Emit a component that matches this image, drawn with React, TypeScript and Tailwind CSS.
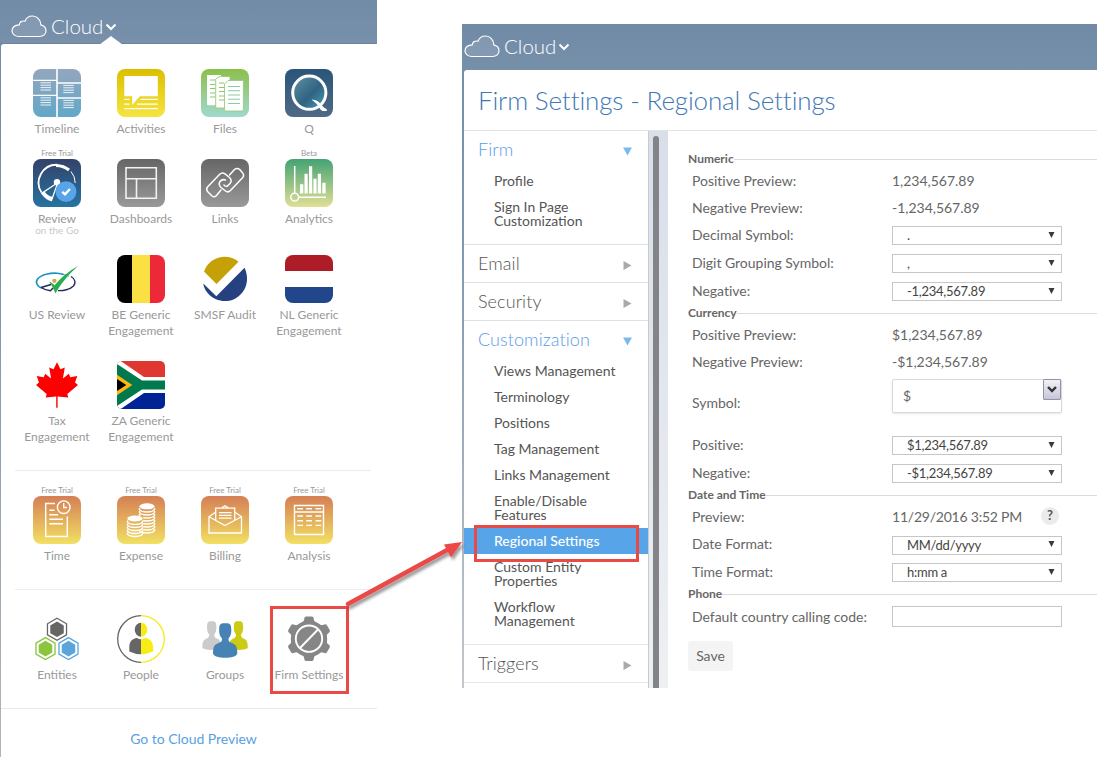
import React from "react";

type Stops = [string, string];

function Tile({ id, stops, children }: { id: string; stops: Stops; children: React.ReactNode }) {
  return (
    <svg viewBox="0 0 48 48" className="h-12 w-12 shrink-0">
      <defs>
        <linearGradient id={id} x1="0" y1="0" x2="0" y2="1">
          <stop offset="0" stopColor={stops[0]} />
          <stop offset="1" stopColor={stops[1]} />
        </linearGradient>
      </defs>
      <rect width="48" height="48" rx="8" fill={`url(#${id})`} />
      {children}
    </svg>
  );
}

function Plain({ children }: { children: React.ReactNode }) {
  return (
    <svg viewBox="0 0 48 48" className="h-12 w-12 shrink-0">
      {children}
    </svg>
  );
}

const ORANGE: Stops = ["#d57f55", "#f2e063"];
const GRAY: Stops = ["#666666", "#999999"];

function Timeline() {
  return (
    <Tile id="g-timeline" stops={["#94a6bd", "#62a8c8"]}>
      <g stroke="#fff" fill="none">
        <path strokeWidth="1.6" d="M24 0V48" />
        <path strokeWidth="1.3" d="M0 11.3H24M0 26.4H24M24 14H48M24 29H48" />
        <path
          strokeWidth="1"
          opacity=".85"
          d="M7.5 13.8H18M7.5 16.2H18M7.5 18.6H18M7.5 21H18M7.5 28.8H18M7.5 31.2H18M7.5 33.6H18M7.5 36H18M30.3 16.4H40.8M30.3 18.8H40.8M30.3 21.2H40.8M30.3 23.6H40.8M30.3 31.4H40.8M30.3 33.8H40.8M30.3 36.2H40.8M30.3 38.6H40.8"
        />
      </g>
    </Tile>
  );
}

function Activities() {
  return (
    <Tile id="g-act" stops={["#dbbf00", "#f6e43f"]}>
      <path fill="#fff" d="M7.3 7H40.8V27.2H23L15.2 36V27.2H7.3Z" />
      <path
        stroke="#fff"
        strokeWidth="1.3"
        d="M7.3 30.4H12.5M7.3 35.2H12.5M23.5 30.4H40.8M20 35.2H40.8M7.3 39.6H40.8"
      />
    </Tile>
  );
}

function Files() {
  return (
    <Tile id="g-files" stops={["#8bc04a", "#9fd9cd"]}>
      <path fill="#fff" d="M6 6H20V36.3H7.5A1.5 1.5 0 0 1 6 34.8Z" />
      <path stroke="#8fc66c" strokeWidth="1" d="M9 11H14M9 15.5H14M9 19.5H14M9 24H14M9 28H14" />
      <path fill="#fff" stroke="#98cc72" strokeWidth=".9" d="M17 8.3L19.5 7.5H29V39H16.5A1.5 1.5 0 0 1 14.7 37.5V10Z" />
      <path stroke="#8fc66c" strokeWidth="1" d="M18 14H23M18 18.5H23M18 22.5H23M18 27H23M18 31H23" />
      <path fill="#fff" stroke="#98cc82" strokeWidth=".9" d="M27 11.5H42.4V40.7A1.3 1.3 0 0 1 41 42H24.8A1.3 1.3 0 0 1 23.5 40.7V15Z" />
      <path stroke="#8fcaa0" strokeWidth="1.1" d="M27 17.5H39M27 21.8H39M27 26H39M27 30.3H39M27 34.5H39" />
    </Tile>
  );
}

function QIcon() {
  return (
    <Tile id="g-q" stops={["#2a5579", "#4f6a85"]}>
      <defs>
        <linearGradient id="g-q2" x1="0" y1="0" x2="1" y2="1">
          <stop offset="0" stopColor="#6592a6" />
          <stop offset=".55" stopColor="#2f6482" />
          <stop offset="1" stopColor="#4e9fba" />
        </linearGradient>
      </defs>
      <circle cx="24.3" cy="23.7" r="16.6" fill="url(#g-q2)" stroke="#fff" strokeWidth="3" />
      <path fill="#fff" d="M27 30.5C31 30.8 33 32 35.5 34.8C37.5 37 38.5 39 41.8 40.2V42H37.5C34.5 40.5 33.5 36 30 33.5C29 32.5 27.5 31.8 27 30.5Z" />
    </Tile>
  );
}

function Review() {
  return (
    <Tile id="g-review" stops={["#33426a", "#2673a0"]}>
      <g fill="none" stroke="#fff">
        <path strokeWidth="1.8" d="M8.5 33.5A18 18 0 0 1 24.5 5.8" />
        <path strokeWidth="3" d="M23 6.4Q31 6.6 36 11" />
        <path strokeWidth="1" d="M38 12.5A18 18 0 0 1 42.2 24" />
        <path strokeWidth="1.3" d="M22 25.5L8.8 34.3C11 37.5 14.5 40.5 18.5 41.5L24 26" />
      </g>
      <path fill="#fff" d="M8.8 34.3C11 37.5 14.5 40.5 18.5 41.5L20 38C16 37.5 13 35 11.5 32.5Z" />
      <circle cx="24" cy="23.3" r="3.2" fill="#fff" />
      <circle cx="33" cy="32.7" r="10.4" fill="#57a5e8" />
      <path d="M29.3 32.8L32 35.3L37 30" fill="none" stroke="#fff" strokeWidth="2.4" />
    </Tile>
  );
}

function Dashboards() {
  return (
    <Tile id="g-dash" stops={GRAY}>
      <path fill="none" stroke="#f2f2f2" strokeWidth="1.6" d="M9 8.8H39.3V39.3H9ZM9 19.8H39.3M19.5 19.8V39.3" />
    </Tile>
  );
}

function Links() {
  return (
    <Tile id="g-links" stops={GRAY}>
      <g fill="none" stroke="#fff" strokeWidth="1.5" strokeLinecap="round" strokeLinejoin="round">
        <path d="M20 31L15.5 36.5Q13.5 38.8 11 37L7 33Q4.5 30.5 6.5 28L18.5 15.5Q21 13 24 14.8L28.5 18.5Q31.5 21.5 29 24.5L26.5 27Q24 27.8 23 26" />
        <path d="M28.5 16L33.5 10.5Q36 8.5 38.5 10.3L41.3 13.5Q43.8 16 41.5 18.8L29.5 31.5Q27 34 24.5 32L20 28.5Q17 25.5 19 22.5Q21 19.8 24.5 21" />
      </g>
    </Tile>
  );
}

function Analytics() {
  return (
    <Tile id="g-analytics" stops={["#43a373", "#e0df95"]}>
      <g fill="none" stroke="#fff" strokeWidth="1.5">
        <path d="M9.7 7V34.3M13.8 38.2H41" />
        <circle cx="9.7" cy="38.2" r="3.9" />
      </g>
      <path
        fill="#fff"
        d="M15 25.3H18.3V34.5H15ZM19.5 14.7H22.7V34.5H19.5ZM24 7.3H27.2V34.5H24ZM28.4 19.7H31.6V34.5H28.4ZM32.8 14.7H36V34.5H32.8ZM37.3 23.7H40.6V34.5H37.3Z"
      />
    </Tile>
  );
}

function UsReview() {
  return (
    <Plain>
      <g fill="none">
        <path stroke="#1b93c0" strokeWidth="1.6" d="M8.5 33C3.5 31 2 27 5 23.5C8.5 19.5 17 17.8 24 18.2Q28 18.5 30.5 19.5" />
        <path stroke="#1b93c0" strokeWidth=".8" d="M29 19.2C32 19.8 34 20.4 36 21.3" />
        <path stroke="#202c60" strokeWidth="1.4" d="M38 21.5C42.5 24 43 28 40.5 31C37 34.6 30 36 25 35.6" />
        <path stroke="#202c60" strokeWidth="1.5" d="M8 32.5L18 29.5M8 32.5C11 34.5 14 35.3 17.5 35.7L20 33" />
      </g>
      <circle cx="21.4" cy="25.8" r="2.1" fill="#d1a64c" />
      <path fill="#27ad4b" d="M16 26.5C18.5 27 20.5 29 21.5 30.5C27.5 23 36 16 45 11C36.5 18.5 28.5 27.5 22.5 38.5C20.5 34 19 30 16 26.5Z" />
    </Plain>
  );
}

function Belgium() {
  return (
    <Plain>
      <clipPath id="c-be"><rect width="48" height="48" rx="8" /></clipPath>
      <g clipPath="url(#c-be)">
        <rect width="15" height="48" fill="#000" />
        <rect x="15" width="18" height="48" fill="#fae042" />
        <rect x="33" width="15" height="48" fill="#ed2939" />
      </g>
    </Plain>
  );
}

function Smsf() {
  return (
    <Plain>
      <path fill="#c5a006" d="M3 16.5C8 1.5 26.5-2.7 37.5 6.7L15.5 29Z" />
      <path fill="#25417f" d="M2.3 28.5L15.3 41.3L43.5 12.8C53 33 34 52.5 14.5 44C8 41 3 35 2.3 28.5Z" />
    </Plain>
  );
}

function Netherlands() {
  return (
    <Plain>
      <clipPath id="c-nl"><rect width="48" height="48" rx="8" /></clipPath>
      <g clipPath="url(#c-nl)">
        <rect width="48" height="16" fill="#ae1c28" />
        <rect y="16" width="48" height="16" fill="#fff" />
        <rect y="32" width="48" height="16" fill="#21468b" />
      </g>
    </Plain>
  );
}

function Canada() {
  return (
    <Plain>
      <path
        fill="#f00"
        d="M24 1.3L27.5 8.2L31.8 6.5L29.9 17.5L35.8 12.8L37.3 16.2L44.3 15L42 21.5L45 24L34.3 33L35.3 36.5L24.6 35.6V46.8H23.2V35.6L12.7 36.5L13.7 33L3 24L6 21.5L3.7 15L10.7 16.2L12.2 12.8L18.1 17.5L16.2 6.5L20.5 8.2Z"
      />
    </Plain>
  );
}

function SouthAfrica() {
  return (
    <Plain>
      <clipPath id="c-za"><rect width="48" height="48" rx="5" /></clipPath>
      <g clipPath="url(#c-za)">
        <rect width="48" height="24" fill="#de3831" />
        <rect y="24" width="48" height="24" fill="#002395" />
        <path fill="#fff" d="M0-2L3-.5L27 16H48V32H27L3 48.5L0 50Z" />
        <path fill="#007a4d" d="M0 3L25 19.5H48V28.5H25L0 45Z" />
        <path fill="#ffb612" d="M0 13.8L15.3 24L0 34.2Z" />
        <path fill="#000" d="M0 18L9.3 24L0 30Z" />
      </g>
    </Plain>
  );
}

function TimeIcon() {
  return (
    <Tile id="g-time" stops={ORANGE}>
      <g fill="none" stroke="#fff" strokeWidth="1.4">
        <path d="M22 7.5H12.7V40.5H34.3V20.5" />
        <circle cx="30.7" cy="11.2" r="6.3" />
        <path d="M30.7 7V11.5H34M16.3 14.3H21.5M16.3 18.7H25M16.3 23.3H30M16.3 27.7H30" />
      </g>
    </Tile>
  );
}

function ExpenseIcon() {
  const right = [13.5, 16.5, 19.5, 22.5, 25.5, 28.5, 31.5, 34.5];
  const left = [26, 29, 32, 35, 38];
  return (
    <Tile id="g-exp" stops={ORANGE}>
      <ellipse cx="30" cy="10.3" rx="7.5" ry="3" fill="#fff" />
      <g fill="none" stroke="#fff" strokeWidth="1.5">
        {right.map((y) => (
          <path key={y} d={`M22.5 ${y - 1.5}V${y}C24 ${y + 3.2} 36 ${y + 3.2} 37.5 ${y}V${y - 1.5}`} />
        ))}
      </g>
      <path fill="#e6b25c" d="M9.8 20H26.3V34H9.8Z" />
      <ellipse cx="18" cy="22.5" rx="7.7" ry="3" fill="#fff" />
      <g fill="none" stroke="#fff" strokeWidth="1.5">
        {left.map((y) => (
          <path key={y} d={`M10.5 ${y - 1.5}V${y}C12 ${y + 3.2} 24 ${y + 3.2} 25.5 ${y}V${y - 1.5}`} />
        ))}
      </g>
    </Tile>
  );
}

function BillingIcon() {
  return (
    <Tile id="g-bill" stops={ORANGE}>
      <g fill="none" stroke="#fff" strokeWidth="1.3">
        <path d="M14.7 16L8 20.8V37H40.5V20.8L33.7 16M8 20.8L24 29.5L40.5 20.8" />
        <path d="M14.7 24V12.2H33.7V24M20.5 12L24 9.7L27.5 12" />
        <path d="M18 16.7H30.5M18 19.4H30.5M18 22.1H30.5" />
      </g>
    </Tile>
  );
}

function AnalysisIcon() {
  return (
    <Tile id="g-anl" stops={ORANGE}>
      <g fill="none" stroke="#fff" strokeWidth="1.4">
        <path d="M9.5 9.5H38.5V38.5H9.5ZM9.5 16H38.5" />
        <path d="M12.3 12.8H18M21.2 12.8H27M30.5 12.8H36.2M12.3 20H18M21.2 20H27M30.5 20H36.2M12.3 24.7H18M21.2 24.7H27M30.5 24.7H36.2M12.3 29.4H18M21.2 29.4H27M30.5 29.4H36.2" />
      </g>
    </Tile>
  );
}

function hex(cx: number, cy: number, r: number) {
  const w = r * 0.866;
  const h = r / 2;
  return `${cx},${cy - r} ${cx + w},${cy - h} ${cx + w},${cy + h} ${cx},${cy + r} ${cx - w},${cy + h} ${cx - w},${cy - h}`;
}

function Entities() {
  const cells: [number, number, string][] = [
    [24, 14.3, "#666666"],
    [12.5, 33.6, "#8bc53f"],
    [35.5, 33.6, "#5ba5dc"],
  ];
  return (
    <Plain>
      {cells.map(([x, y, c]) => (
        <g key={c}>
          <polygon points={hex(x, y, 11)} fill="none" stroke={c} strokeWidth="1.3" />
          <polygon points={hex(x, y, 7.8)} fill={c} />
        </g>
      ))}
    </Plain>
  );
}

function People() {
  const body = "M17.7 14.7a6.3 7 0 1 1 12.6 0a6.3 7 0 1 1-12.6 0ZM20 23Q24 25.5 28 23C33 23.5 36 27 36 32V36.5Q30 39.2 24 39.2T12.3 36.5V32C12.3 27 15 23.5 20 23Z";
  return (
    <Plain>
      <clipPath id="c-pl"><rect width="24" height="48" /></clipPath>
      <clipPath id="c-pr"><rect x="24" width="24" height="48" /></clipPath>
      <g clipPath="url(#c-pl)">
        <circle cx="24" cy="24" r="23.3" fill="none" stroke="#666" strokeWidth="1.3" />
        <path d={body} fill="#666" />
      </g>
      <g clipPath="url(#c-pr)">
        <circle cx="24" cy="24" r="23.3" fill="none" stroke="#f5eb1d" strokeWidth="1.3" />
        <path d={body} fill="#f7ec13" />
      </g>
    </Plain>
  );
}

function Groups() {
  const side = "M-4.600-8.500C-4.600-13-1.500-12.700 0-12.700C1.500-12.700 4.600-13 4.600-8.500C5-4.500 4-1 2.500 .5C2.500 3 3 3.500 5.500 4.700C8.500 6 9.300 8.500 9.300 14C6 16.500-6 16.500-9.300 14C-9.300 8.500-8.500 6-5.500 4.700C-3 3.500-2.500 3-2.500 .5C-4-1-5-4.500-4.600-8.500Z";
  return (
    <Plain>
      <path d={side} transform="translate(10.7 19)" fill="#cbcbcb" />
      <path d={side} transform="translate(37.5 19)" fill="#cccb13" />
      <path
        d="M18.200 13.500C18.200 8 21.500 8.200 24.200 8.200S30.200 8 30.200 13.500C30.800 18 29.500 21.500 27.500 23.300C27.500 26.500 28 27 31.500 28.200C35.500 29.700 36.300 32.500 36.300 38.500C35 44.300 13.500 44.300 12 38.500C12 32.500 13 29.700 17 28.200C20.500 27 21 26.500 21 23.300C19 21.500 17.700 18 18.200 13.500Z"
        fill="#4682b4"
      />
    </Plain>
  );
}

function Gear() {
  return (
    <Plain>
      <g fill="#868686">
        <circle cx="24" cy="23.7" r="18.2" />
        {[0, 60, 120, 180, 240, 300].map((a) => (
          <path key={a} transform={`rotate(${a} 24 23.7)`} d="M16.5 8.5Q19 7 19.5 2.5Q20 1.4 21.5 1.4H26.5Q28 1.4 28.5 2.5Q29 7 31.5 8.5Z" />
        ))}
      </g>
      <circle cx="24" cy="23.7" r="13.2" fill="none" stroke="#fff" strokeWidth="1.9" />
      <path d="M15 33L33 14.5" stroke="#fff" strokeWidth="2" />
    </Plain>
  );
}

type App = { label: string; icon: React.ReactNode; caption?: string; sub?: string };

function AppTile({ label, icon, caption, sub }: App) {
  return (
    <div className="flex w-[84px] flex-col items-center text-center text-[#999]">
      <div className="h-[11px] text-[8px] leading-[11px]">{caption}</div>
      {icon}
      <div className="mt-1 px-1 text-[12px] leading-4">{label}</div>
      {sub && <div className="-mt-[3px] text-[10px] leading-[12px] text-[#c8c8c8]">{sub}</div>}
    </div>
  );
}

function Row({ apps, className }: { apps: App[]; className: string }) {
  return (
    <div className={`flex pl-[14px] ${className}`}>
      {apps.map((a) => (
        <AppTile key={a.label} {...a} />
      ))}
    </div>
  );
}

function Brand() {
  return (
    <div className="flex items-center text-white">
      <svg viewBox="0 0 36 23" className="h-[23px] w-9">
        <path
          d="M8 21.5H28.5C32.5 21.5 35 19 35 15.8C35 12.8 33 10.5 29.8 9.8C29.8 5 26 1 21.6 1C18 1 15 3 14 6.3C11 5.3 8.5 7 8.3 9.8C3.8 9.8 1 12.3 1 15.8C1 19 4 21.5 8 21.5Z"
          fill="#ffffff1c"
          stroke="#fff"
          strokeWidth="1.2"
        />
      </svg>
      <span className="-mt-px ml-1 w-[51px] text-[20.5px] leading-6 font-light">Cloud</span>
      <svg viewBox="0 0 12 8" className="ml-[3px] h-2 w-3">
        <path d="M1.5 1.5L6 6L10.5 1.5" fill="none" stroke="#fff" strokeWidth="2" />
      </svg>
    </div>
  );
}

function Launcher() {
  return (
    <section className="relative flex h-[757px] w-[377px] shrink-0 flex-col bg-gradient-to-b from-[#728ca8] from-0% via-[#7a92aa] via-30% to-[#b3b5b8] to-100% pl-px">
      <header className="-ml-px flex h-11 shrink-0 items-center border-b border-[#6d849e] bg-gradient-to-b from-[#718ba7] to-[#7890aa] pt-[10px] pl-[11px]">
        <Brand />
      </header>
      <svg viewBox="0 0 24 9" className="absolute top-[36px] left-[99px] h-[9px] w-6">
        <path d="M0 9L12 0L24 9Z" fill="#fff" />
      </svg>
      <div className="flex flex-1 flex-col rounded-tl-[3px] bg-white pt-[14px]">
        <Row
          className="h-[90px]"
          apps={[
            { label: "Timeline", icon: <Timeline /> },
            { label: "Activities", icon: <Activities /> },
            { label: "Files", icon: <Files /> },
            { label: "Q", icon: <QIcon /> },
          ]}
        />
        <Row
          className="h-24"
          apps={[
            { label: "Review", icon: <Review />, caption: "Free Trial", sub: "on the Go" },
            { label: "Dashboards", icon: <Dashboards /> },
            { label: "Links", icon: <Links /> },
            { label: "Analytics", icon: <Analytics />, caption: "Beta" },
          ]}
        />
        <Row
          className="h-[106px]"
          apps={[
            { label: "US Review", icon: <UsReview /> },
            { label: "BE Generic Engagement", icon: <Belgium /> },
            { label: "SMSF Audit", icon: <Smsf /> },
            { label: "NL Generic Engagement", icon: <Netherlands /> },
          ]}
        />
        <Row
          className="h-[120px]"
          apps={[
            { label: "Tax Engagement", icon: <Canada /> },
            { label: "ZA Generic Engagement", icon: <SouthAfrica /> },
          ]}
        />
        <hr className="mr-[6px] ml-[14px] border-[#ececec]" />
        <Row
          className="mt-[14px] h-[104px]"
          apps={[
            { label: "Time", icon: <TimeIcon />, caption: "Free Trial" },
            { label: "Expense", icon: <ExpenseIcon />, caption: "Free Trial" },
            { label: "Billing", icon: <BillingIcon />, caption: "Free Trial" },
            { label: "Analysis", icon: <AnalysisIcon />, caption: "Free Trial" },
          ]}
        />
        <hr className="mr-[6px] ml-[14px] border-[#ececec]" />
        <div className="mt-[14px] flex h-[104px] pl-[14px]">
          <AppTile label="Entities" icon={<Entities />} />
          <AppTile label="People" icon={<People />} />
          <AppTile label="Groups" icon={<Groups />} />
          <div className="relative whitespace-nowrap">
            <AppTile label="Firm Settings" icon={<Gear />} />
            <div className="absolute top-[2px] left-[3px] h-[88px] w-[79px] border-3 border-[#ea4a46]" />
          </div>
        </div>
        <hr className="border-[#e8e8e8]" />
        <div className="flex flex-1 items-center justify-center pt-[11px] pl-[9px] text-[14px] tracking-[-0.03px] text-[#5a9fe2]">
          Go to Cloud Preview
        </div>
      </div>
    </section>
  );
}

function MenuHead({ label, open }: { label: string; open?: boolean }) {
  return (
    <div className={`flex h-[37px] items-center justify-between pr-4 pl-[14px] text-[18px] font-light tracking-[0.08px] ${open ? "text-[#5a9be6]" : "text-[#555]"}`}>
      <span>{label}</span>
      {open ? (
        <svg viewBox="0 0 9 9" className="mt-1 h-[9px] w-[9px]"><path d="M0 0.5H9L4.5 8.5Z" fill="#7cb9ec" /></svg>
      ) : (
        <svg viewBox="0 0 9 9" className="mt-1 h-[9px] w-[9px]"><path d="M0.5 0V9L8.5 4.5Z" fill="#a9a9a9" /></svg>
      )}
    </div>
  );
}

function MenuItem({ children, active }: { children: React.ReactNode; active?: boolean }) {
  return (
    <div className={`py-[6px] pr-6 pl-[30px] text-[14px] leading-[14px] ${active ? "bg-[#57a5e8] font-medium text-white" : "text-[#555]"}`}>
      {children}
    </div>
  );
}

function Sidebar() {
  return (
    <nav className="flex w-[184px] shrink-0 flex-col bg-white">
      <div className="border-b border-[#dde1e6] pb-[10px]">
        <MenuHead label="Firm" open />
        <MenuItem>Profile</MenuItem>
        <MenuItem>Sign In Page Customization</MenuItem>
      </div>
      <div className="border-b border-[#dde1e6]"><MenuHead label="Email" /></div>
      <div className="border-b border-[#dde1e6]"><MenuHead label="Security" /></div>
      <div className="border-b border-[#e6e6e8] pb-[10px]">
        <MenuHead label="Customization" open />
        <MenuItem>Views Management</MenuItem>
        <MenuItem>Terminology</MenuItem>
        <MenuItem>Positions</MenuItem>
        <MenuItem>Tag Management</MenuItem>
        <MenuItem>Links Management</MenuItem>
        <MenuItem>Enable/Disable Features</MenuItem>
        <div className="relative">
          <MenuItem active>Regional Settings</MenuItem>
          <div className="absolute -top-[3px] left-[10px] h-[37px] w-[165px] border-3 border-[#ea4a46]" />
        </div>
        <MenuItem>Custom Entity Properties</MenuItem>
        <MenuItem>Workflow Management</MenuItem>
      </div>
      <div className="border-b border-[#e6e6e8]"><MenuHead label="Triggers" /></div>
    </nav>
  );
}

function Legend({ children }: { children: React.ReactNode }) {
  return (
    <div className="flex h-4 items-center text-[12px] leading-4 font-bold text-[#666]">
      <span>{children}</span>
      <span className="mt-px h-px flex-1 bg-[#dcdcdc]" />
    </div>
  );
}

function Field({ label, h = "h-7", children }: { label: string; h?: string; children: React.ReactNode }) {
  return (
    <div className={`flex items-center pl-1 text-[14px] tracking-[-0.02px] text-[#666] ${h}`}>
      <div className="w-[200px] shrink-0 pb-[2px]">{label}</div>
      {children}
    </div>
  );
}

function Value({ children }: { children: React.ReactNode }) {
  return <span className="pb-[2px]">{children}</span>;
}

function Select({ children }: { children: React.ReactNode }) {
  return (
    <div className="mt-px flex h-[19px] w-[170px] items-center justify-between border border-[#c6c6c6] pr-[6px] pl-[14px] text-[13px] leading-[17px] tracking-[-0.27px] text-[#444]">
      <span>{children}</span>
      <svg viewBox="0 0 7 7" className="mb-[2px] h-[6px] w-[7px]"><path d="M0 0H7L3.5 7Z" fill="#3a3a3a" /></svg>
    </div>
  );
}

function SettingsForm() {
  return (
    <main className="flex flex-1 flex-col bg-white pt-5 pl-5">
      <Legend>Numeric</Legend>
      <Field label="Positive Preview:"><Value>1,234,567.89</Value></Field>
      <Field label="Negative Preview:" h="h-[26px]"><Value>-1,234,567.89</Value></Field>
      <Field label="Decimal Symbol:"><Select>.</Select></Field>
      <Field label="Digit Grouping Symbol:"><Select>,</Select></Field>
      <Field label="Negative:"><Select>-1,234,567.89</Select></Field>
      <Legend>Currency</Legend>
      <Field label="Positive Preview:"><Value>$1,234,567.89</Value></Field>
      <Field label="Negative Preview:" h="h-[26px]"><Value>-$1,234,567.89</Value></Field>
      <Field label="Symbol:" h="h-14">
        <div className="mb-[14px] flex h-[34px] w-[170px] items-center justify-between rounded-[2px] border border-[#d9d9d9] pl-[10px] shadow-[0_1px_2px_#0000001a]">
          <Value>$</Value>
          <span className="mb-[13px] flex h-[21px] w-[18px] items-center justify-center rounded-[1px] border border-[#9292a8] bg-gradient-to-b from-[#f2f2f6] to-[#c6c6d8]">
            <svg viewBox="0 0 10 7" className="h-[7px] w-[10px]"><path d="M1 1L5 5L9 1" fill="none" stroke="#333" strokeWidth="2.4" /></svg>
          </span>
        </div>
      </Field>
      <Field label="Positive:"><Select>$1,234,567.89</Select></Field>
      <Field label="Negative:"><Select>-$1,234,567.89</Select></Field>
      <Legend>Date and Time</Legend>
      <Field label="Preview:">
        <span className="w-[149px] pb-[2px] tracking-[-0.22px]">11/29/2016 3:52 PM</span>
        <span className="mb-[2px] flex h-[18px] w-[18px] items-center justify-center rounded-full bg-[#ebebeb] text-[13px] font-bold text-[#555]">?</span>
      </Field>
      <Field label="Date Format:" h="h-[27px]"><Select>MM/dd/yyyy</Select></Field>
      <Field label="Time Format:"><Select>h:mm a</Select></Field>
      <Legend>Phone</Legend>
      <Field label="Default country calling code:" h="h-[30px]">
        <div className="mb-px h-[21px] w-[170px] border border-[#c6c6c6]" />
      </Field>
      <button className="mt-[9px] h-[30px] w-[45px] rounded-[3px] bg-[#f4f4f4] pb-[2px] text-[14px] text-[#666]">Save</button>
    </main>
  );
}

function Settings() {
  return (
    <section className="mt-6 ml-[85px] flex h-[664px] w-[635px] shrink-0 flex-col overflow-hidden bg-gradient-to-b from-[#728ca8] via-[#8299af] via-35% to-[#c4c7cb] pl-[2px]">
      <header className="-ml-[2px] flex h-[46px] shrink-0 items-center bg-gradient-to-b from-[#718ba7] to-[#7690aa] pb-px pl-[2px]">
        <Brand />
      </header>
      <h1 className="flex h-[61px] shrink-0 items-center rounded-tl-[3px] border-b border-[#e1e3e5] bg-white pl-[14px] text-[26px] font-light tracking-[-0.14px] whitespace-nowrap text-[#3f78b4]">
        Firm Settings - Regional Settings
      </h1>
      <div className="flex h-[557px]">
        <Sidebar />
        <div className="flex w-5 shrink-0 border-l border-[#c5ccd4] bg-gradient-to-b from-[#d8dfe9] to-[#eef0f2] pt-[5px] pl-1">
          <div className="w-[6px] rounded-t-[3px] bg-[#828487]" />
        </div>
        <SettingsForm />
      </div>
    </section>
  );
}

export default function App() {
  return (
    <div className="relative flex h-[757px] w-[1097px] items-start overflow-hidden bg-white font-['Lato',sans-serif]">
      <Launcher />
      <Settings />
      <svg viewBox="0 0 130 80" className="absolute top-[536px] left-[340px] h-20 w-[130px]">
        <defs>
          <filter id="soft" x="-20%" y="-20%" width="140%" height="150%">
            <feDropShadow dx="2" dy="3" stdDeviation="1.5" floodColor="#000" floodOpacity=".4" />
          </filter>
        </defs>
        <g filter="url(#soft)">
          <path d="M8 68L109 13" stroke="#ea4a46" strokeWidth="4.5" strokeLinecap="round" />
          <path d="M122 6L104 8.5L111 21.5Z" fill="#ea4a46" />
        </g>
      </svg>
    </div>
  );
}
